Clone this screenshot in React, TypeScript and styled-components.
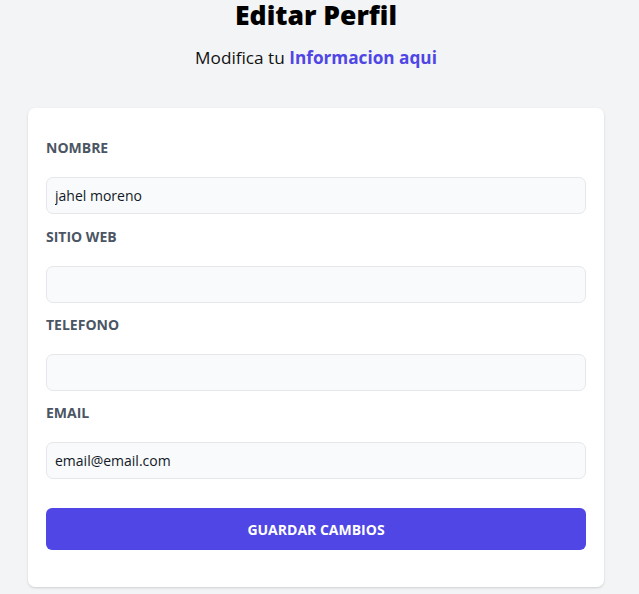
import React from "react";
import styled, { createGlobalStyle } from "styled-components";

const Global = createGlobalStyle`
  html, body { margin: 0; padding: 0; background: #f3f4f6; }
  body { font-family: "Open Sans", "Noto Sans", sans-serif; }
  * { box-sizing: border-box; }
`;

const Page = styled.div`
  width: 639px;
  min-height: 594px;
  background: #f3f4f6;
  padding-left: 28px;
`;

const Wrap = styled.div`
  width: 576px;
`;

const Title = styled.h1`
  margin: 0;
  padding-top: 1px;
  font-size: 26.5px;
  line-height: 28px;
  font-weight: 800;
  color: #000;
  text-align: center;
`;

const Subtitle = styled.p`
  margin: 15px 0 0;
  font-size: 17.2px;
  line-height: 28px;
  color: #111;
  text-align: center;
`;

const Accent = styled.span`
  color: #4f46e5;
  font-weight: 700;
`;

const Card = styled.form`
  margin-top: 36px;
  background: #fff;
  border-radius: 7px;
  box-shadow: 0 1px 3px rgba(0, 0, 0, 0.1), 0 1px 2px rgba(0, 0, 0, 0.06);
  padding: 30px 18px 37px;
  display: flex;
  flex-direction: column;
`;

const Field = styled.div`
  display: flex;
  flex-direction: column;
  margin-bottom: 12px;
  &:first-child {
    margin-bottom: 13px;
  }
`;

const Label = styled.label`
  font-size: 14px;
  line-height: 20px;
  font-weight: 700;
  color: #4b5563;
  text-transform: uppercase;
  margin-bottom: 19px;
`;

const Input = styled.input`
  height: 37px;
  width: 100%;
  border: 1px solid #e5e7eb;
  border-radius: 7px;
  background: #f9fafb;
  padding: 0 8px;
  font-family: inherit;
  font-size: 14px;
  color: #111827;
  outline: none;
`;

const Button = styled.button`
  margin-top: 17px;
  height: 42px;
  width: 100%;
  border: none;
  border-radius: 6px;
  background: #4f46e5;
  color: #fff;
  font-family: inherit;
  font-size: 14px;
  font-weight: 700;
  text-transform: uppercase;
`;

const fields = [
  { label: "Nombre", value: "jahel moreno" },
  { label: "Sitio Web", value: "" },
  { label: "Telefono", value: "" },
  { label: "Email", value: "email@email.com" },
];

export default function App() {
  return (
    <>
      <Global />
      <Page>
        <Wrap>
          <Title>Editar Perfil</Title>
          <Subtitle>
            Modifica tu <Accent>Informacion aqui</Accent>
          </Subtitle>
          <Card onSubmit={(e) => e.preventDefault()}>
            {fields.map((f) => (
              <Field key={f.label}>
                <Label>{f.label}</Label>
                <Input defaultValue={f.value} />
              </Field>
            ))}
            <Button type="submit">Guardar Cambios</Button>
          </Card>
        </Wrap>
      </Page>
    </>
  );
}
